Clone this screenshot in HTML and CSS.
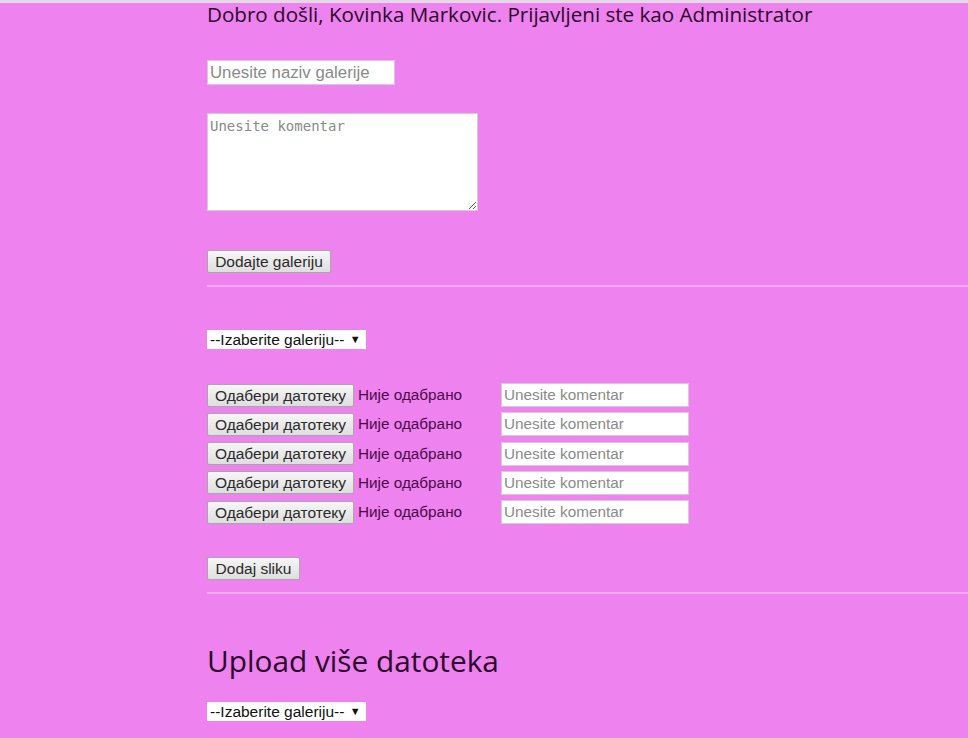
FILE: index.html
```html
<!DOCTYPE html>
<html>
<head>
<meta charset="utf-8">
<link rel="stylesheet" href="styles.css">
</head>
<body>
<div class="topbar"></div>
<main class="page">
  <p class="welcome">Dobro došli, Kovinka Markovic. Prijavljeni ste kao Administrator</p>

  <form class="gallery-form">
    <input class="text-in name-in" type="text" placeholder="Unesite naziv galerije">
    <textarea class="comment-area" placeholder="Unesite komentar"></textarea>
    <button type="button" class="btn add-gallery">Dodajte galeriju</button>
  </form>

  <hr class="sep">

  <form class="image-form">
    <div class="select-box first-select">--Izaberite galeriju-- <span class="arrow">▼</span></div>
    <div class="rows">
      <div class="row"><button type="button" class="btn file-btn">Одабери датотеку</button><span class="file-label">Није одабрано</span><input class="text-in row-in" type="text" placeholder="Unesite komentar"></div>
      <div class="row"><button type="button" class="btn file-btn">Одабери датотеку</button><span class="file-label">Није одабрано</span><input class="text-in row-in" type="text" placeholder="Unesite komentar"></div>
      <div class="row"><button type="button" class="btn file-btn">Одабери датотеку</button><span class="file-label">Није одабрано</span><input class="text-in row-in" type="text" placeholder="Unesite komentar"></div>
      <div class="row"><button type="button" class="btn file-btn">Одабери датотеку</button><span class="file-label">Није одабрано</span><input class="text-in row-in" type="text" placeholder="Unesite komentar"></div>
      <div class="row"><button type="button" class="btn file-btn">Одабери датотеку</button><span class="file-label">Није одабрано</span><input class="text-in row-in" type="text" placeholder="Unesite komentar"></div>
    </div>
    <button type="button" class="btn add-image">Dodaj sliku</button>
  </form>

  <hr class="sep">

  <h2 class="upload-title">Upload više datoteka</h2>
  <div class="select-box">--Izaberite galeriju-- <span class="arrow">▼</span></div>
</main>
</body>
</html>
```

FILE: styles.css
```css
html, body {
  margin: 0;
  padding: 0;
  background: #ee82ee;
  height: 100%;
  overflow: hidden;
}
.topbar {
  height: 3px;
  background: linear-gradient(#dcdcdc, #f2d4f2);
}
.page {
  padding-left: 207px;
  display: flex;
  flex-direction: column;
  align-items: flex-start;
  font-family: "Liberation Sans", Arial, sans-serif;
}
.welcome {
  margin: 0;
  font-family: "Open Sans", sans-serif;
  font-size: 20.6px;
  line-height: 22px;
  color: #2a0a2a;
  white-space: nowrap;
}
.gallery-form {
  display: flex;
  flex-direction: column;
  align-items: flex-start;
  margin-top: 35px;
}
.text-in {
  box-sizing: border-box;
  border: 1px solid #d8c8d8;
  background: #fff;
  font-family: "Liberation Sans", Arial, sans-serif;
  font-size: 15.3px;
  padding: 0 2px;
  margin: 0;
  outline: none;
}
.text-in::placeholder { color: #8a8a8a; }
.name-in {
  width: 188px;
  height: 25px;
  font-size: 16.8px;
}
.comment-area {
  box-sizing: border-box;
  margin: 28px 0 0 0;
  width: 271px;
  height: 98px;
  border: 1px solid #d8c8d8;
  background: #fff;
  font-family: "DejaVu Sans Mono", monospace;
  font-size: 14px;
  padding: 4px 2px;
  resize: both;
}
.comment-area::placeholder { color: #8a8a8a; }
.btn {
  box-sizing: border-box;
  height: 23px;
  margin: 0;
  padding: 0;
  border: 1px solid #a8a8a8;
  border-radius: 2px;
  background: linear-gradient(#f6f6f6, #dedede);
  font-family: "Liberation Sans", Arial, sans-serif;
  font-size: 15.5px;
  color: #2a2a2a;
  line-height: 21px;
  text-align: center;
  white-space: nowrap;
}
.add-gallery {
  margin-top: 39px;
  width: 124px;
}
.sep {
  align-self: stretch;
  margin: 12px 0 0 0;
  border: 0;
  height: 2px;
  background: #f2a9f2;
}
.image-form {
  display: flex;
  flex-direction: column;
  align-items: flex-start;
}
.select-box {
  box-sizing: border-box;
  height: 19px;
  background: #fff;
  font-family: "Liberation Sans", Arial, sans-serif;
  font-size: 15.5px;
  line-height: 19px;
  color: #111;
  padding: 0 0 0 3px;
  width: 159px;
  white-space: nowrap;
}
.select-box .arrow {
  font-size: 11px;
  vertical-align: 2px;
  margin-left: 1px;
}
.first-select {
  margin-top: 43px;
}
.rows {
  margin-top: 34px;
  display: flex;
  flex-direction: column;
  gap: 5.25px;
}
.row {
  display: flex;
  align-items: center;
  height: 24px;
}
.file-btn {
  width: 147px;
}
.file-label {
  margin-left: 4px;
  width: 143px;
  font-size: 15.3px;
  color: #4a0a4a;
  white-space: nowrap;
}
.row-in {
  width: 188px;
  height: 24px;
}
.add-image {
  margin-top: 33px;
  width: 93px;
}
.upload-title {
  margin: 47px 0 0 0;
  font-family: "Open Sans", sans-serif;
  font-weight: normal;
  font-size: 29.8px;
  line-height: 40px;
  color: #2a0a2a;
  white-space: nowrap;
}
.upload-title + .select-box {
  margin-top: 21px;
}
```
